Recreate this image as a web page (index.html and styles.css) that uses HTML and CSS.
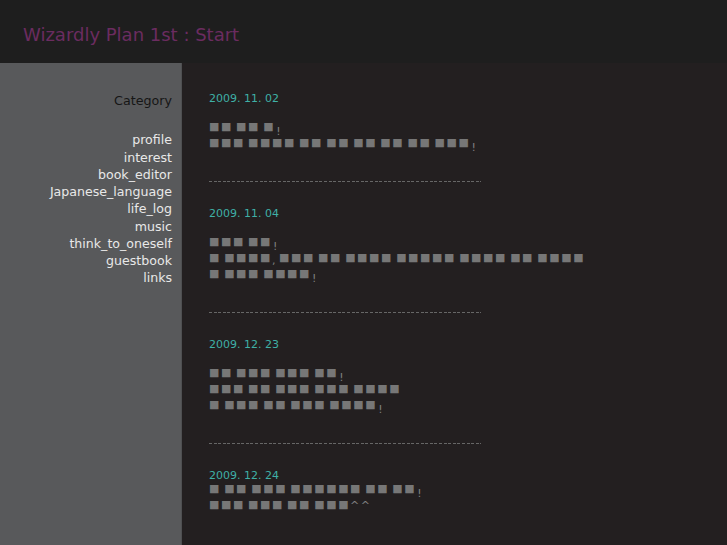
FILE: index.html
```html
<!DOCTYPE html>
<html lang="ko">
<head>
<meta charset="utf-8">
<title>Wizardly Plan 1st : Start</title>
<link rel="stylesheet" href="styles.css">
</head>
<body>
<header class="top">
  <h1 class="title">Wizardly Plan 1st : Start</h1>
</header>
<div class="wrap">
  <aside class="side">
    <h2 class="cat">Category</h2>
    <ul class="menu">
      <li>profile</li>
      <li>interest</li>
      <li>book_editor</li>
      <li>Japanese_language</li>
      <li>life_log</li>
      <li>music</li>
      <li>think_to_oneself</li>
      <li>guestbook</li>
      <li>links</li>
    </ul>
  </aside>
  <main class="main">
    <article class="entry">
      <p class="date">2009. 11. 02</p>
      <p class="body"><span class="k">■■ ■■ ■</span><span class="p">!</span><br><span class="k">■■■ ■■■■ ■■ ■■ ■■ ■■ ■■ ■■■</span><span class="p">!</span></p>
    </article>
    <hr class="div">
    <article class="entry">
      <p class="date">2009. 11. 04</p>
      <p class="body"><span class="k">■■■ ■■</span><span class="p">!</span><br><span class="k">■ ■■■■</span><span class="p cm">, </span><span class="k">■■■ ■■ ■■■■ ■■■■■ ■■■■ ■■ ■■■■</span><br><span class="k">■ ■■■ ■■■■</span><span class="p">!</span></p>
    </article>
    <hr class="div">
    <article class="entry">
      <p class="date">2009. 12. 23</p>
      <p class="body"><span class="k">■■ ■■■ ■■■ ■■</span><span class="p">!</span><br><span class="k">■■■ ■■ ■■■ ■■■ ■■■■</span><br><span class="k">■ ■■■ ■■ ■■■ ■■■■</span><span class="p">!</span></p>
    </article>
    <hr class="div">
    <article class="entry">
      <p class="date">2009. 12. 24</p>
      <p class="body tight"><span class="k">■ ■■ ■■■ ■■■■■■ ■■ ■■</span><span class="p">!</span><br><span class="k">■■■ ■■■ ■■ ■■■</span><span class="p ct">^^</span></p>
    </article>
  </main>
</div>
</body>
</html>
```

FILE: styles.css
```css
html, body {
  margin: 0;
  padding: 0;
}
body {
  background: #231f20;
  font-family: "DejaVu Sans", Verdana, sans-serif;
  min-height: 100vh;
  display: flex;
  flex-direction: column;
}
.top {
  height: 63px;
  background: #1e1e1e;
  flex: none;
}
.title {
  margin: 0;
  padding: 24px 0 0 23px;
  font-size: 18px;
  line-height: 21px;
  font-weight: normal;
  color: #6b2c60;
}
.wrap {
  flex: 1;
  display: flex;
}
.side {
  width: 172px;
  flex: none;
  background: #58595b;
  border-right: 1px solid #4e4f51;
  padding: 29px 9px 0 0;
  text-align: right;
  font-size: 12.6px;
  line-height: 17.25px;
}
.cat {
  margin: 0 0 22px;
  font-size: 12.7px;
  font-weight: normal;
  color: #161616;
}
.menu {
  list-style: none;
  margin: 0;
  padding: 0;
  color: #e8e8e8;
}
.main {
  flex: 1;
  padding: 28px 0 0 27px;
}
.entry {
  margin: 0;
}
.date {
  margin: 0;
  font-size: 11px;
  line-height: 16px;
  color: #3fb0a6;
}
.body {
  margin: 13px 0 0;
  font-size: 11px;
  line-height: 16px;
  color: #7a7a7a;
}
.body.tight {
  margin-top: -2px;
}
.k {
  font-size: 11px;
  line-height: 0;
  letter-spacing: 1.57px;
  word-spacing: -1.9px;
  vertical-align: 1px;
  color: #777777;
}
.p {
  font-size: 11px;
  line-height: 0;
  vertical-align: -4px;
  margin-left: 1px;
  color: #808080;
}
.p.cm {
  vertical-align: -1.5px;
  margin-left: 0;
}
.p.ct {
  vertical-align: 0;
  margin-left: 0;
  letter-spacing: 1.5px;
}
.div {
  width: 272px;
  height: 1px;
  border: 0;
  margin: 29px 0 24px;
  background: repeating-linear-gradient(to right, #666 0, #666 3px, transparent 3px, transparent 4.6px);
}
```
